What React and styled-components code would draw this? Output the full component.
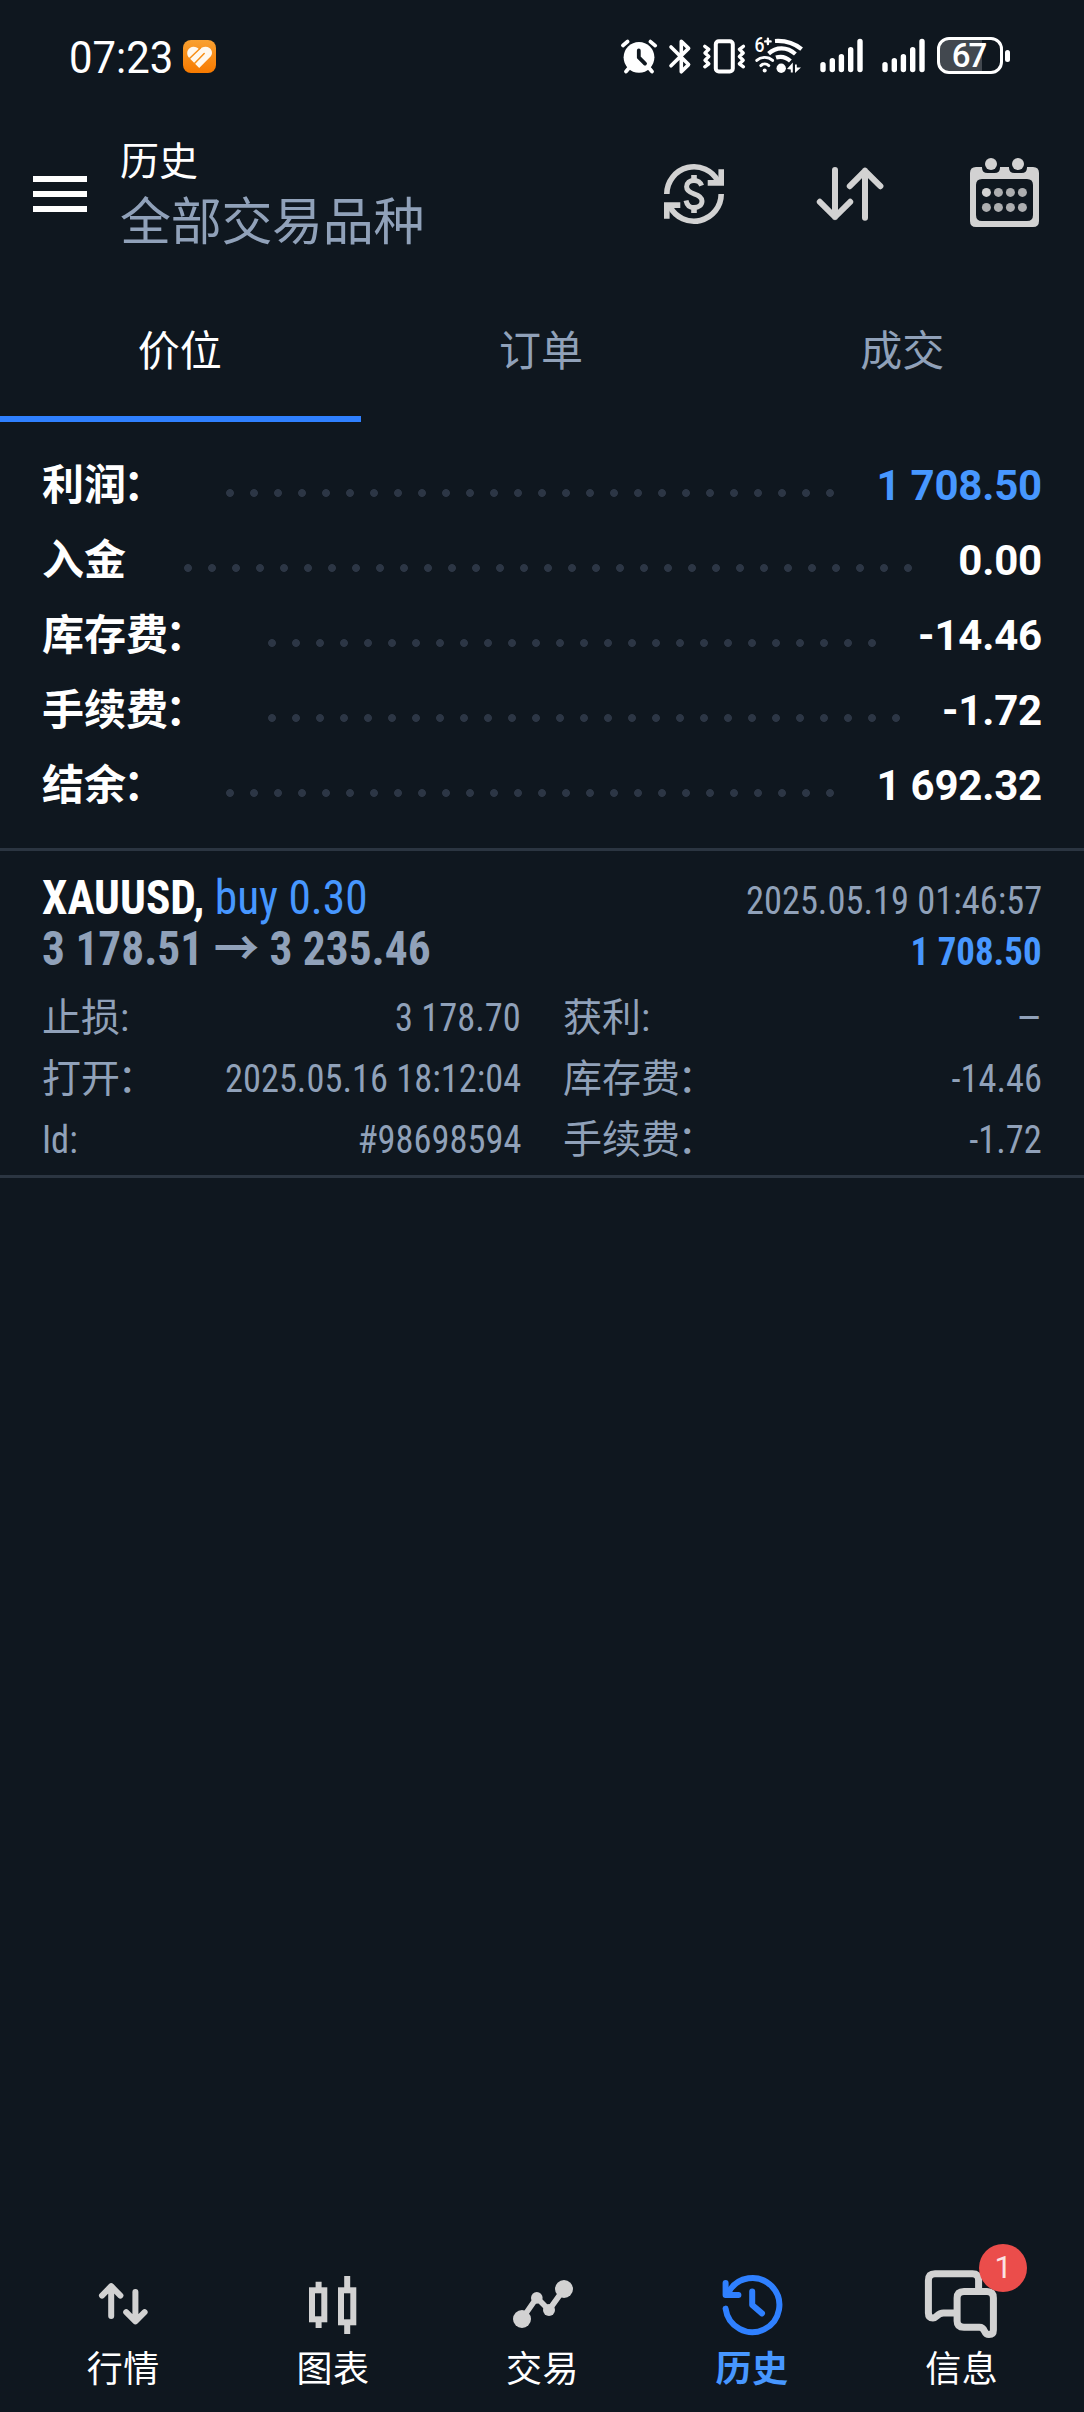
import React from 'react';
import styled, { createGlobalStyle } from 'styled-components';

const c = {
  bg: '#0f171f',
  white: '#ffffff',
  muted: '#90a1b9',
  icon: '#d2d2d2',
  line: '#2b3541',
  dot: '#2c3645',
  accent: '#2f80ff',
  blue: '#4797ff',
  badge: '#eb4d4b',
};

const Global = createGlobalStyle`
  * { box-sizing: border-box; }
  body {
    margin: 0;
    background: ${c.bg};
    font-family: Roboto, "Noto Sans CJK SC", sans-serif;
  }
  svg { display: block; overflow: visible; }
`;

const Screen = styled.main`
  display: flex;
  flex-direction: column;
  width: 1084px;
  height: 2412px;
  background: ${c.bg};
  color: ${c.white};
  overflow: hidden;
`;

/* Status bar */
const StatusBar = styled.div`
  display: flex;
  justify-content: space-between;
  height: 112px;
  padding: 36px 74px 0 69px;
`;
const StatusLeft = styled.div`
  display: flex;
  align-items: flex-start;
`;
const Clock = styled.div`
  width: 114px;
  font-size: 45px;
  line-height: 43px;
  transform: scaleX(0.93);
  transform-origin: left;
  white-space: nowrap;
`;
const AppBadge = styled.div`
  width: 33px;
  height: 33px;
  margin-top: 4px;
  border-radius: 8px;
  background: linear-gradient(#f9a030, #f77a00);
`;
const StatusRight = styled.div`
  display: flex;
`;
const Battery = styled.div`
  display: flex;
  align-items: center;
  justify-content: center;
  width: 66px;
  height: 37px;
  margin: 1px 2px 0;
  padding-right: 3px;
  border: 3px solid ${c.white};
  border-radius: 12px;
  background: linear-gradient(to right, #42484f 42px, transparent 42px);
  font-size: 33px;
  font-weight: 500;
  letter-spacing: -2px;
`;
const BatteryTip = styled.div`
  width: 5px;
  height: 12px;
  margin-top: 14px;
  border-radius: 3px;
  background: ${c.white};
`;

/* Header */
const Header = styled.header`
  display: flex;
  align-items: center;
  height: 164px;
  padding: 0 42px 0 33px;
`;
const Burger = styled.div`
  display: flex;
  flex-direction: column;
  gap: 9px;
  width: 54px;
`;
const BurgerLine = styled.span`
  height: 6px;
  background: ${c.white};
`;
const Titles = styled.div`
  flex: 1;
  align-self: flex-start;
  padding: 27px 0 0 33px;
`;
const Title = styled.div`
  font-size: 39px;
  line-height: 46px;
`;
const Subtitle = styled.div`
  margin-bottom: -12px;
  color: ${c.muted};
  font-size: 51px;
  letter-spacing: -0.3px;
  line-height: 75px;
`;
const Actions = styled.div`
  display: flex;
  gap: 84px;
`;

/* Tabs */
const Tabs = styled.nav`
  display: flex;
  height: 146px;
`;
const Tab = styled.div`
  flex: 1;
  padding: 45px 2px 0 0;
  border-bottom: 6px solid ${(p) => (p.$active ? c.accent : 'transparent')};
  color: ${(p) => (p.$active ? c.white : c.muted)};
  font-size: 42px;
  line-height: 61px;
  text-align: center;
`;

/* Totals */
const Summary = styled.section`
  padding: 26px 42px 25px;
  border-bottom: 3px solid ${c.line};
`;
const SummaryRow = styled.div`
  display: flex;
  height: 75px;
  font-size: 42px;
  font-weight: 700;
  line-height: 75px;
`;
const Colon = styled.span`
  margin: 0 0.065em 0 -0.065em;
`;
const Leader = styled.div`
  width: ${(p) => p.$count * 24}px;
  height: 8px;
  margin: 41px 0 0 50px;
  background: radial-gradient(circle at center, ${c.dot} 3.5px, transparent 4.3px) 0 0 / 24px 8px repeat-x;
`;
const SummaryValue = styled.div`
  margin-left: auto;
  color: ${(p) => (p.$blue ? c.blue : c.white)};
  letter-spacing: -0.2px;
`;

/* Position */
const Position = styled.section`
  padding: 21px 42px 4px;
  border-bottom: 3px solid ${c.line};
  font-family: "Roboto Condensed", Roboto, "Noto Sans CJK SC", sans-serif;
  font-stretch: 75%;
  color: ${c.muted};
`;
const Line = styled.div`
  display: flex;
  justify-content: space-between;
  align-items: baseline;
  height: 51px;
  line-height: 51px;
  font-size: 48px;
`;
const Deal = styled.div`
  transform: scaleX(0.945);
  transform-origin: left;
  white-space: pre;
`;
const Symbol = styled.b`
  color: ${c.white};
`;
const Side = styled.span`
  color: ${c.blue};
`;
const Arrow = styled.span`
  font-family: "Noto Sans CJK SC", sans-serif;
  line-height: 0;
`;
const Narrow = styled.span`
  font-size: 39px;
  transform: scaleX(0.934);
  transform-origin: ${(p) => p.$origin || 'right'};
`;
const Profit = styled.b`
  font-size: 39px;
  color: ${c.blue};
  transform: scaleX(0.945);
  transform-origin: right;
`;
const Details = styled.div`
  display: grid;
  grid-template-columns: 1fr 1fr;
  column-gap: 42px;
  margin-top: 14px;
`;
const Detail = styled.div`
  display: flex;
  justify-content: space-between;
  height: 61px;
  font-size: 39px;
  line-height: 61px;
`;
const Dash = styled.span`
  font-family: Roboto, sans-serif;
  font-stretch: 100%;
`;

const Empty = styled.div`
  flex: 1;
`;

/* Bottom navigation */
const BottomNav = styled.nav`
  display: flex;
  padding: 0 18px 18px;
`;
const NavItem = styled.div`
  flex: 1;
  display: flex;
  flex-direction: column;
  align-items: center;
  color: ${(p) => (p.$active ? c.blue : c.white)};
  font-size: 36px;
  font-weight: ${(p) => (p.$active ? 700 : 400)};
  line-height: 48px;
`;
const NavIcon = styled.div`
  position: relative;
  width: 84px;
  height: 86px;
  color: ${(p) => (p.$active ? c.accent : c.icon)};
`;
const NavLabel = styled.span`
  margin-right: -1px;
  letter-spacing: 0.5px;
`;
const Count = styled.span`
  position: absolute;
  left: 60px;
  top: -16px;
  width: 48px;
  height: 48px;
  border-radius: 50%;
  background: ${c.badge};
  color: #fbe3e3;
  font-size: 31px;
  line-height: 48px;
  text-align: center;
`;

const line = (w, color = 'currentColor') => ({
  fill: 'none', stroke: color, strokeWidth: w, strokeLinecap: 'round', strokeLinejoin: 'round',
});

const HeartLogo = () => (
  <svg width="33" height="33" viewBox="0 0 33 33">
    <path fill="#fff8ee" d="M16.2 28 L5.4 17 C2.4 12 5.8 6.7 10.4 6.7 C13 6.7 14.7 7.8 16.2 9.4 C18 7.6 20 6.7 22.6 6.7 C28 6.7 31 12.6 27.6 16.6 Z" />
    <path {...line(1.5, '#f88e14')} d="M6.5 18.5 L17.5 8 M11.5 23.5 L21.2 13.5" />
  </svg>
);

const AlarmIcon = () => (
  <svg width="43" height="40" viewBox="620 36 43 40">
    <circle cx="639" cy="57.3" r="15.4" fill="#fff" />
    <path {...line(3.8, '#fff')} d="M622.9 45.4 L627.6 41.6 M650.4 41.6 L655.2 45.6 M626 71.5 L629 68 M652 71.5 L649 68" />
    <path {...line(3.8, c.bg)} d="M638.8 50.4 V57.4 L645 63.6" />
  </svg>
);
const BluetoothIcon = () => (
  <svg width="34" height="40" viewBox="663 36 34 40">
    <path {...line(3.6, '#fff')} d="M671 47 L688.6 64.6 L681.3 71.8 V41.2 L688.6 48.4 L671 65.8" />
  </svg>
);
const VibrateIcon = () => (
  <svg width="53" height="40" viewBox="697 36 53 40">
    <rect x="715.8" y="41.2" width="17" height="30.2" rx="3" {...line(4, '#fff')} />
    <path {...line(3.4, '#fff')} d="M704.8 46.3 L708.8 49.3 L705 53 L708.8 56.6 L705 60.2 L708.8 63.8 L704.8 66.8 M743.4 46.3 L739.4 49.3 L743.2 53 L739.4 56.6 L743.2 60.2 L739.4 63.8 L743.4 66.8" />
  </svg>
);
const Tiny = styled.text`
  font: 500 21px Roboto, sans-serif;
  fill: #fff;
`;
const WifiIcon = () => (
  <svg width="61" height="40" viewBox="750 36 61 40">
    <Tiny x="754.4" y="52.2" textLength="10" lengthAdjust="spacingAndGlyphs">6</Tiny>
    <path {...line(2.4, '#fff')} d="M765.2 41.4 H770.6 M767.9 38.7 V44.1" />
    <g {...line(4.2, '#fff')} strokeLinecap="butt">
      <path d="M775 41 C784 40.4 794 43 801.6 49.2" />
      <path d="M768.6 53.6 C776 46.6 787 46.4 795.4 54" />
      <path d="M776 57.6 C781 56 786 57 790.4 61" />
    </g>
    <path {...line(2.9, '#fff')} d="M756.8 60.4 C761 56.4 768.4 56.4 772.6 60.4 M760.8 65.6 C763.2 63.4 766.4 63.4 768.8 65.6" />
    <circle cx="764.7" cy="70.4" r="2" fill="#fff" />
    <circle cx="781.2" cy="68.2" r="4.7" fill="#fff" />
    <path fill="#fff" d="M787 69 L792.8 62.6 V72.6 H790.8 V69.4 Z M795 64.4 H796.8 V67.4 H801 L795 73 Z" />
  </svg>
);
const SignalIcon = () => (
  <svg width="62" height="40" viewBox="811 36 62 40">
    <path {...line(5.4, '#fff')} d="M823 64.7 V69.6 M832.3 60.7 V69.6 M841.4 56.7 V69.6 M850.7 49.7 V69.6 M860 41.4 V69.6" />
  </svg>
);

const CurrencyIcon = () => (
  <svg width="72" height="72" viewBox="0 0 72 72">
    <g fill="none" stroke={c.icon} strokeWidth="5.6">
      <path d="M8.8 36 A27.2 27.2 0 0 1 60.2 23.6" />
      <path d="M63.2 11.3 V24.9 H49.7" />
      <path d="M63.2 36 A27.2 27.2 0 0 1 11.8 48.4" />
      <path d="M8.8 60.7 V47.1 H22.3" />
      <path strokeWidth="5" d="M43.6 27.6 C42.4 24 39.6 22.4 36 22.4 C31.6 22.4 28.6 25 28.6 28.8 C28.6 33 32 34.5 36 35.8 C40.5 37.2 44 38.8 44 43 C44 47.2 40.5 49.6 36 49.6 C31.8 49.6 29 47.2 28 42.4" />
      <path d="M36 17 V22.5 M36 49.5 V55" />
    </g>
  </svg>
);
const SortIcon = () => (
  <svg width="72" height="72" viewBox="0 0 72 72">
    <path {...line(6, c.icon)} d="M21 12 V59 M5.8 43.8 L21 59 L36.2 43.8 M51 59.8 V12.8 M35.8 28.2 L51 12.8 L66.4 28.2" />
  </svg>
);
const CalendarIcon = () => (
  <svg width="72" height="72" viewBox="0 0 72 72">
    <path fill={c.icon} fillRule="evenodd" d="M6 9 H12 V9.5 Q12 15 17.5 15 H24.5 Q30 15 30 9.5 V9 H39 V9.5 Q39 15 44.5 15 H51.5 Q57 15 57 9.5 V9 H63 Q69 9 69 15 V63 Q69 69 63 69 H6 Q0 69 0 63 V15 Q0 9 6 9 Z M12 21 Q6 21 6 27 V57 Q6 63 12 63 H57 Q63 63 63 57 V27 Q63 21 57 21 Z" />
    <circle cx="21" cy="6" r="6" fill={c.icon} />
    <circle cx="48" cy="6" r="6" fill={c.icon} />
    {[34.4, 49.4].map((y, r) =>
      [16.4, 28.4, 40.4, 52.4].map((x, i) => (
        <circle key={`${y}-${x}`} cx={x} cy={y} r="4.5" fill={r + i === 0 ? c.icon : '#adaeb0'} />
      ))
    )}
  </svg>
);

const QuotesIcon = () => (
  <svg width="84" height="86" viewBox="0 0 84 86">
    <path {...line(6)} d="M30.2 56 V26.2 M21 35.6 L30.2 26.2 L39.4 35.6 M54.4 32 V61 M45.2 52.2 L54.4 61.4 L63.6 52.2" />
  </svg>
);
const ChartIcon = () => (
  <svg width="84" height="86" viewBox="0 0 84 86">
    <g fill="none" stroke="currentColor" strokeWidth="6">
      <rect x="22" y="30.3" width="12.3" height="29" />
      <path d="M28.6 21.7 V29 M28.6 62 V68" />
      <rect x="51" y="30.3" width="12.3" height="32" />
      <path d="M57.2 16 V29 M57.2 64 V74" />
    </g>
  </svg>
);
const TradeIcon = () => (
  <svg width="84" height="86" viewBox="0 0 84 86">
    <path {...line(5.6)} d="M22 59 L36.8 37.7 L49 50 L64 29" />
    <g fill="currentColor">
      <circle cx="22" cy="59" r="9" />
      <circle cx="36.8" cy="37.9" r="5.8" />
      <circle cx="49" cy="50" r="6" />
      <circle cx="64" cy="29" r="9" />
    </g>
  </svg>
);
const HistoryIcon = () => (
  <svg width="84" height="86" viewBox="0 0 84 86">
    <path {...line(6)} d="M15.6 48.6 A27 27 0 1 0 18.4 32.6" />
    <path {...line(6)} d="M15.6 23 V35 H28.4 M42.2 31.6 V45 L52 53.4" />
  </svg>
);
const MessagesIcon = () => (
  <svg width="84" height="86" viewBox="0 0 84 86">
    <path {...line(7)} strokeLinecap="butt" d="M59.6 30 V20 Q59.6 13.8 53.5 13.8 H16 Q9.4 13.8 9.4 20.5 V53 Q9.4 58 14 58 C18 58 18 53 24.5 53 H37" />
    <path {...line(7)} d="M45 31.5 H68 Q74.4 31.5 74.4 38 V70 Q74.4 74.6 70 74.6 C64 74.6 67 67.3 60.5 67.3 H45 Q38.1 67.3 38.1 61 V38 Q38.1 31.5 45 31.5 Z" />
  </svg>
);

const totals = [
  { label: '利润：', value: '1 708.50', dots: 26, blue: true },
  { label: '入金', value: '0.00', dots: 31 },
  { label: '库存费：', value: '-14.46', dots: 26 },
  { label: '手续费：', value: '-1.72', dots: 27 },
  { label: '结余：', value: '1 692.32', dots: 26 },
];

const details = [
  ['止损:', '3 178.70'],
  ['获利:', '–'],
  ['打开：', '2025.05.16 18:12:04'],
  ['库存费：', '-14.46'],
  ['Id:', '#98698594'],
  ['手续费：', '-1.72'],
];

const navItems = [
  { label: '行情', Icon: QuotesIcon },
  { label: '图表', Icon: ChartIcon },
  { label: '交易', Icon: TradeIcon },
  { label: '历史', Icon: HistoryIcon, active: true },
  { label: '信息', Icon: MessagesIcon, count: 1 },
];

/* Pulls a full-width colon closer to the word before it. */
const Label = ({ text }) =>
  text.endsWith('：') ? (
    <span>{text.slice(0, -1)}<Colon>：</Colon></span>
  ) : (
    <span>{text}</span>
  );

export default function App() {
  return (
    <Screen>
      <Global />
      <StatusBar>
        <StatusLeft>
          <Clock>07:23</Clock>
          <AppBadge><HeartLogo /></AppBadge>
        </StatusLeft>
        <StatusRight>
          <AlarmIcon />
          <BluetoothIcon />
          <VibrateIcon />
          <WifiIcon />
          <SignalIcon />
          <SignalIcon />
          <Battery>67</Battery>
          <BatteryTip />
        </StatusRight>
      </StatusBar>

      <Header>
        <Burger>
          <BurgerLine />
          <BurgerLine />
          <BurgerLine />
        </Burger>
        <Titles>
          <Title>历史</Title>
          <Subtitle>全部交易品种</Subtitle>
        </Titles>
        <Actions>
          <CurrencyIcon />
          <SortIcon />
          <CalendarIcon />
        </Actions>
      </Header>

      <Tabs>
        <Tab $active>价位</Tab>
        <Tab>订单</Tab>
        <Tab>成交</Tab>
      </Tabs>

      <Summary>
        {totals.map((t) => (
          <SummaryRow key={t.label}>
            <Label text={t.label} />
            <Leader $count={t.dots} />
            <SummaryValue $blue={t.blue}>{t.value}</SummaryValue>
          </SummaryRow>
        ))}
      </Summary>

      <Position>
        <Line>
          <Deal><Symbol>XAUUSD,</Symbol> <Side>buy 0.30</Side></Deal>
          <Narrow>2025.05.19 01:46:57</Narrow>
        </Line>
        <Line>
          <Deal as="b">3 178.51 <Arrow>→</Arrow> 3 235.46</Deal>
          <Profit>1 708.50</Profit>
        </Line>
        <Details>
          {details.map(([label, value]) => (
            <Detail key={label}>
              {label === 'Id:' ? <Narrow $origin="left">{label}</Narrow> : <Label text={label} />}
              {value === '–' ? <Dash>{value}</Dash> : <Narrow>{value}</Narrow>}
            </Detail>
          ))}
        </Details>
      </Position>

      <Empty />

      <BottomNav>
        {navItems.map(({ label, Icon, active, count }) => (
          <NavItem key={label} $active={active}>
            <NavIcon $active={active}>
              <Icon />
              {count && <Count>{count}</Count>}
            </NavIcon>
            <NavLabel>{label}</NavLabel>
          </NavItem>
        ))}
      </BottomNav>
    </Screen>
  );
}
